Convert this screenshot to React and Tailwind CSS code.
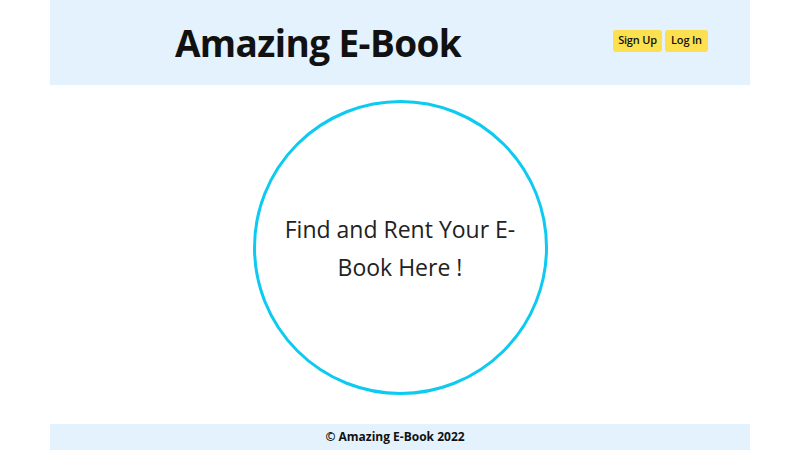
export default function App() {
  return (
    <div className="w-[800px] h-[450px] bg-white overflow-hidden" style={{ fontFamily: '"Open Sans", "Noto Sans", sans-serif' }}>
      <div className="mx-auto w-[700px] flex flex-col h-[450px]">
        <header className="h-[85px] bg-[#e3f2fd] flex items-center">
          <div className="w-[536px] flex justify-center">
            <h1 className="text-[37px] font-bold text-[#111] tracking-[-0.6px] leading-none">Amazing E-Book</h1>
          </div>
          <div className="flex gap-[3px] ml-[27px] -mt-[4px]">
            <button className="h-[22px] w-[49px] rounded-[3px] bg-[#fde04f] text-[11px] font-semibold text-[#111] tracking-[-0.2px]">Sign Up</button>
            <button className="h-[22px] w-[43px] rounded-[3px] bg-[#fde04f] text-[11px] font-semibold text-[#111] tracking-[-0.2px]">Log In</button>
          </div>
        </header>
        <main className="flex-1 flex justify-center items-start pt-[15px]">
          <div className="w-[295px] h-[295px] rounded-full border-[3px] border-[#0dcaf0] flex items-center justify-center px-[28px]">
            <p className="text-[23px] leading-[38px] text-center text-[#222]">Find and Rent Your E-Book Here !</p>
          </div>
        </main>
        <footer className="h-[26px] bg-[#e3f2fd] flex justify-center items-center">
          <span className="text-[12px] font-bold text-[#111] -ml-[10px]">© Amazing E-Book 2022</span>
        </footer>
      </div>
    </div>
  );
}
